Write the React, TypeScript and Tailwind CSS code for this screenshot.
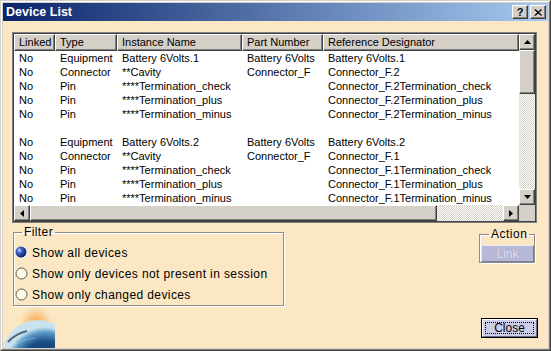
import React from "react";

const cols = [41, 62, 125, 81, 196];
const headers = ["Linked", "Type", "Instance Name", "Part Number", "Reference Designator"];

const rows: string[][] = [
  ["No", "Equipment", "Battery 6Volts.1", "Battery 6Volts", "Battery 6Volts.1"],
  ["No", "Connector", "**Cavity", "Connector_F", "Connector_F.2"],
  ["No", "Pin", "****Termination_check", "", "Connector_F.2Termination_check"],
  ["No", "Pin", "****Termination_plus", "", "Connector_F.2Termination_plus"],
  ["No", "Pin", "****Termination_minus", "", "Connector_F.2Termination_minus"],
  ["", "", "", "", ""],
  ["No", "Equipment", "Battery 6Volts.2", "Battery 6Volts", "Battery 6Volts.2"],
  ["No", "Connector", "**Cavity", "Connector_F", "Connector_F.1"],
  ["No", "Pin", "****Termination_check", "", "Connector_F.1Termination_check"],
  ["No", "Pin", "****Termination_plus", "", "Connector_F.1Termination_plus"],
  ["No", "Pin", "****Termination_minus", "", "Connector_F.1Termination_minus"],
];

const btn3d =
  "bg-[#d4d0c8] border border-t-white border-l-white border-r-[#404040] border-b-[#404040] shadow-[inset_-1px_-1px_0_#808080]";
const checker =
  "bg-[image:repeating-conic-gradient(#d4d0c8_0_25%,#ffffff_0_50%)] bg-[length:2px_2px]";

function Arrow({ dir }: { dir: "up" | "down" | "left" | "right" }) {
  const pts = {
    up: "3.5,0 7,4 0,4",
    down: "0,0 7,0 3.5,4",
    left: "4,0 4,7 0,3.5",
    right: "0,0 4,3.5 0,7",
  }[dir];
  const v = dir === "up" || dir === "down";
  return (
    <svg width={v ? 7 : 4} height={v ? 4 : 7} viewBox={v ? "0 0 7 4" : "0 0 4 7"}>
      <polygon points={pts} fill="#000" />
    </svg>
  );
}

function TitleBar() {
  return (
    <div className="h-[18px] flex items-center bg-[linear-gradient(to_right,#0a246a,#a6caf0)] pl-[3px] pr-[2px]">
      <span className="text-white font-bold text-[12.5px] leading-none">Device List</span>
      <div className="ml-auto flex gap-[2px]">
        <div className={`${btn3d} w-[16px] h-[14px] flex items-center justify-center`}>
          <span className="text-[11px] font-bold leading-none">?</span>
        </div>
        <div className={`${btn3d} w-[16px] h-[14px] flex items-center justify-center`}>
          <svg width="8" height="7" viewBox="0 0 8 7">
            <path d="M0.5 0.5 L7 6.5 M1.5 0.5 L8 6.5 M7 0.5 L0.5 6.5 M8 0.5 L1.5 6.5" stroke="#000" strokeWidth="1" />
          </svg>
        </div>
      </div>
    </div>
  );
}

function DeviceList() {
  return (
    <div className="ml-[9px] mt-[11px] w-[525px] h-[191px] border border-[#808080]">
      <div className="h-full flex flex-col border border-[#404040] bg-white">
        <div className="h-[171px] flex">
          <div className="w-[505px] flex flex-col text-[11px]">
            <div className="h-[17px] flex">
              {headers.map((h, i) => (
                <div
                  key={h}
                  style={{ width: cols[i] }}
                  className="h-full flex items-center pl-[4px] bg-[#d4d0c8] border border-t-white border-l-white border-r-[#404040] border-b-[#404040] shadow-[inset_-1px_-1px_0_#808080] whitespace-nowrap overflow-hidden"
                >
                  {h}
                </div>
              ))}
            </div>
            {rows.map((r, ri) => (
              <div key={ri} className="h-[14px] flex items-center">
                {r.map((c, ci) => (
                  <div
                    key={ci}
                    style={{ width: cols[ci] }}
                    className="pl-[5px] whitespace-nowrap overflow-hidden leading-[14px]"
                  >
                    {c}
                  </div>
                ))}
              </div>
            ))}
          </div>
          <div className="w-[16px] flex flex-col">
            <div className={`${btn3d} h-[16px] flex items-center justify-center`}>
              <Arrow dir="up" />
            </div>
            <div className={`${btn3d} h-[44px]`} />
            <div className={`flex-1 ${checker}`} />
            <div className={`${btn3d} h-[16px] flex items-center justify-center`}>
              <Arrow dir="down" />
            </div>
          </div>
        </div>
        <div className="h-[16px] flex">
          <div className="w-[505px] flex">
            <div className={`${btn3d} w-[16px] flex items-center justify-center`}>
              <Arrow dir="left" />
            </div>
            <div className={`${btn3d} w-[407px]`} />
            <div className={`flex-1 ${checker}`} />
            <div className={`${btn3d} w-[16px] flex items-center justify-center`}>
              <Arrow dir="right" />
            </div>
          </div>
          <div className="w-[16px] bg-[#d4d0c8]" />
        </div>
      </div>
    </div>
  );
}

function Radio({ checked }: { checked?: boolean }) {
  return (
    <svg width="13" height="13" viewBox="0 0 13 13" className="shrink-0">
      <defs>
        <radialGradient id="rsel" cx="35%" cy="35%" r="70%">
          <stop offset="0%" stopColor="#c8dcff" />
          <stop offset="35%" stopColor="#3a62c8" />
          <stop offset="100%" stopColor="#061a66" />
        </radialGradient>
      </defs>
      {checked ? (
        <>
          <circle cx="6.5" cy="6.5" r="6" fill="#ffffff" />
          <circle cx="6" cy="6" r="5.5" fill="url(#rsel)" />
        </>
      ) : (
        <circle cx="6.5" cy="6.5" r="5.5" fill="#fffbe4" stroke="#5a5a5a" strokeWidth="1" />
      )}
    </svg>
  );
}

const groupBox =
  "border border-[#8c8c8c] shadow-[inset_1px_1px_0_#ffffff,1px_1px_0_#ffffff]";

function Filter() {
  const opts = [
    "Show all devices",
    "Show only devices not present in session",
    "Show only changed devices",
  ];
  return (
    <fieldset className={`ml-[10px] w-[271px] ${groupBox} pl-[1px] pt-[3px] pb-0`}>
      <legend className="ml-[7px] px-[2px] text-[12px] leading-[14px] tracking-[0.4px]">Filter</legend>
      {opts.map((o, i) => (
        <div key={o} className="h-[21px] flex items-center gap-[4px]">
          <Radio checked={i === 0} />
          <span className="text-[12px] tracking-[0.4px] whitespace-nowrap">{o}</span>
        </div>
      ))}
    </fieldset>
  );
}

function Action() {
  return (
    <fieldset className={`ml-auto mr-[13px] mt-[2px] w-[56px] ${groupBox} pl-[1px] pt-[4px]`}>
      <legend className="ml-[8px] px-[2px] text-[12px] leading-[14px] tracking-[0.5px]">Action</legend>
      <div className="w-[53px] h-[17px] flex items-center justify-center bg-[#b7b7d6] border border-t-[#e6e6f4] border-l-[#e6e6f4] border-r-[#7c7c9a] border-b-[#7c7c9a] text-[12px] text-[#e4e4f2] [text-shadow:0_0_1px_#8e8eaa]">
        Link
      </div>
    </fieldset>
  );
}

function Globe() {
  return (
    <svg width="52" height="42" viewBox="0 0 52 42" className="shrink-0">
      <defs>
        <radialGradient id="glow" cx="50%" cy="50%" r="50%">
          <stop offset="0%" stopColor="#f59a3c" stopOpacity="0.95" />
          <stop offset="55%" stopColor="#f8c27a" stopOpacity="0.6" />
          <stop offset="100%" stopColor="#fbe7c3" stopOpacity="0" />
        </radialGradient>
        <radialGradient id="earth" cx="60%" cy="65%" r="55%">
          <stop offset="0%" stopColor="#0b1f4a" />
          <stop offset="65%" stopColor="#1c4f8a" />
          <stop offset="88%" stopColor="#5f9cc8" />
          <stop offset="100%" stopColor="#c8e2ee" />
        </radialGradient>
      </defs>
      <circle cx="33" cy="17" r="19" fill="url(#glow)" />
      <circle cx="35" cy="50" r="36" fill="url(#earth)" />
      <path d="M5 36 Q12 28 24 25" stroke="#0a1836" strokeWidth="2" fill="none" opacity="0.6" />
      <path d="M10 40 Q20 33 32 32" stroke="#9cd0e8" strokeWidth="1" fill="none" opacity="0.5" />
    </svg>
  );
}

function CloseButton() {
  return (
    <div className="mb-[10px] mr-[10px] w-[57px] h-[20px] border border-black">
      <div className="h-full flex items-center justify-center p-[2px] bg-[#cdcde8] border border-t-white border-l-white border-r-[#6c6c88] border-b-[#6c6c88]">
        <div className="w-full h-full flex items-center justify-center border border-dotted border-black text-[12px] leading-none">
          Close
        </div>
      </div>
    </div>
  );
}

export default function App() {
  return (
    <div className="w-[551px] h-[351px] overflow-hidden bg-[#d4d0c8] border border-t-[#d4d0c8] border-l-[#d4d0c8] border-r-[#404040] border-b-[#404040] font-['Liberation_Sans',Arial,sans-serif] text-black">
      <div className="h-full flex flex-col border border-t-white border-l-white border-r-[#808080] border-b-[#808080] p-px">
        <TitleBar />
        <div className="flex-1 flex flex-col bg-[#fbe7c3]">
          <DeviceList />
          <div className="flex items-start mt-[2px]">
            <Filter />
            <Action />
          </div>
          <div className="flex-1 flex items-end justify-between">
            <Globe />
            <CloseButton />
          </div>
        </div>
      </div>
    </div>
  );
}
